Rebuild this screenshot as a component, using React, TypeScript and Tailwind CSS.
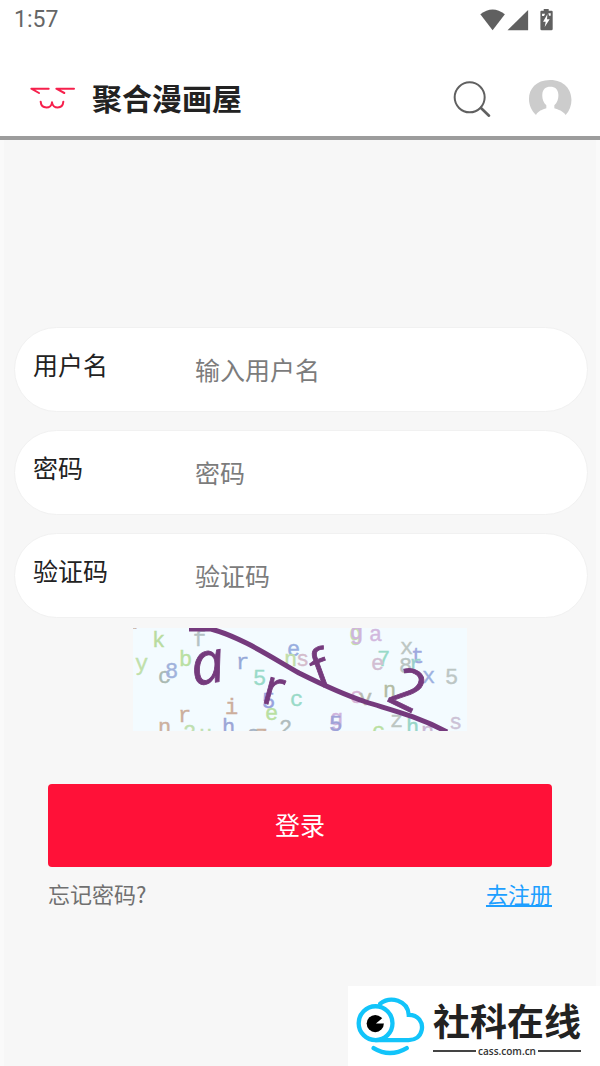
import React from 'react';

type FieldProps = {
  id: string;
  label: string;
  placeholder: string;
  type?: string;
};

type NoiseChar = [char: string, x: number, y: number, color: string];

const noise: NoiseChar[] = [
  ['r', -8, 11, '#c9b0a0'],
  ['k', 19, 19, '#b9dca0'],
  ['f', 60, 18, '#b4c2c4'],
  ['y', 2, 42, '#c0e0aa'],
  ['c', 25, 55, '#a9b9b2'],
  ['8', 32, 50, '#a0b2dc'],
  ['b', 46, 38, '#b9e0a2'],
  ['r', 103, 41, '#96a9d8'],
  ['5', 120, 57, '#98dac8'],
  ['5', 129, 80, '#98a2de'],
  ['i', 92, 86, '#ccae9c'],
  ['r', 45, 94, '#ccae9c'],
  ['n', 25, 106, '#ccb09e'],
  ['2', 50, 112, '#bfe0b0'],
  ['u', 66, 113, '#bfe0b0'],
  ['h', 89, 106, '#9ca6d6'],
  ['a', 114, 113, '#a6b4c6'],
  ['z', 122, 113, '#ccb09e'],
  ['e', 132, 92, '#b9e0a2'],
  ['2', 146, 107, '#b0bcbc'],
  ['c', 157, 78, '#98dac8'],
  ['e', 154, 28, '#98aee0'],
  ['n', 151, 38, '#c2deaa'],
  ['s', 163, 38, '#d4bccc'],
  ['g', 216, 12, '#c2deaa'],
  ['g', 217, 11, '#d0b4dc'],
  ['a', 236, 13, '#d2b8de'],
  ['x', 267, 26, '#bcc6c2'],
  ['t', 278, 35, '#9ea8de'],
  ['7', 244, 38, '#98dac8'],
  ['e', 238, 42, '#d2bed2'],
  ['8', 266, 45, '#b8c4c2'],
  ['r', 276, 43, '#98d0cc'],
  ['x', 289, 55, '#9cb0e0'],
  ['5', 312, 56, '#bcc6c4'],
  ['c', 217, 75, '#d8b4d8'],
  ['n', 250, 69, '#b2bca4'],
  ['v', 226, 77, '#b8bcb2'],
  ['g', 197, 97, '#d0b4dc'],
  ['5', 196, 103, '#9ea2d8'],
  ['c', 239, 110, '#b9e0a2'],
  ['z', 257, 99, '#bcc6c2'],
  ['h', 273, 106, '#98d6c8'],
  ['n', 288, 110, '#ccb8d4'],
  ['s', 316, 101, '#ccc2d6'],
];

const StatusBar = () => (
  <div className="flex h-10 items-center justify-between pr-11 pl-3.5 font-['Roboto',sans-serif]">
    <span className="text-[23px] leading-10 text-[#666]">1:57</span>
    <svg viewBox="145 20 235 75" className="mb-0.5 h-[25px] w-[78px]" fill="#606060" aria-hidden="true">
      <path d="M152 42 Q189 12 226 42 L189 90 Z" />
      <path d="M234 90 L296 29 V90 Z" />
      <path d="M343 26 h15 v5 h9 q3 0 3 3 v52 q0 4 -4 4 h-29 q-4 0 -4 -4 v-52 q0 -3 3 -3 h7 z" />
      <path d="M338 40 h9 l-3 7 h-6 z M357 39 h7 v7 h-5 z" fill="#fff" />
      <path d="M354 42 L341 64 H349 L346 80 L361 57 H353 Z" fill="#fff" />
    </svg>
  </div>
);

const Header = () => (
  <header className="flex h-[100px] items-center border-b-4 border-[#9c9c9c] px-7 pt-[18px]">
    <svg viewBox="84 256 150 75" className="h-[25px] w-[50px]" fill="none" stroke="#f6204c" strokeWidth="6" strokeLinejoin="round" strokeLinecap="round" aria-hidden="true">
      <path d="M146 267 H94 L117 280" />
      <path d="M222 267 H169 L193 280" />
      <path d="M122 306 C124 330 155 328 156 308 C158 328 188 330 190 306" />
    </svg>
    <h1 className="ml-3.5 text-[30px] leading-9 font-bold text-[#222]">聚合漫画屋</h1>
    <button type="button" aria-label="搜索" className="mt-1 ml-auto">
      <svg viewBox="66 240 120 114" className="h-[38px] w-10" fill="none" stroke="#606060" strokeLinecap="round">
        <circle cx="119" cy="292" r="45" strokeWidth="6" />
        <path d="M153 324 L177 347" strokeWidth="8" />
      </svg>
    </button>
    <button type="button" aria-label="我的" className="ml-9">
      <svg viewBox="297 232 132 111" className="h-[37px] w-11" fill="#ccc">
        <path d="M321 340 C283 304 296 235 363 235 C430 235 443 304 410 340 C402 328 388 324 376 320 V311 C386 302 389 290 388 278 C387 262 378 255 364 255 C350 255 341 262 340 278 C339 290 342 302 352 311 V320 C340 324 327 328 321 340 Z" />
      </svg>
    </button>
  </header>
);

const Field = ({ id, label, placeholder, type = 'text' }: FieldProps) => (
  <div className="flex h-[85px] items-start rounded-full border border-[#f1f1f1] bg-white pr-8 pl-[18px]">
    <label htmlFor={id} className="w-[162px] shrink-0 pt-[18px] text-[25px] leading-9 text-[#222]">
      {label}
    </label>
    <input
      id={id}
      type={type}
      placeholder={placeholder}
      className="h-[81px] min-w-0 flex-1 bg-transparent text-[25px] text-[#222] outline-none placeholder:text-[#7c7c7c]"
    />
  </div>
);

const Captcha = () => (
  <svg viewBox="0 0 334 103" className="block h-[103px] w-[334px] bg-[#f3fbff]" role="img" aria-label="验证码">
    <g fontSize="22" strokeWidth="0.4" className="font-['Liberation_Mono',monospace]">
      {noise.map(([char, x, y, color], i) => (
        <text key={i} x={x} y={y} fill={color} stroke={color}>
          {char}
        </text>
      ))}
    </g>
    <g fill="#753a7d" stroke="#753a7d" strokeWidth="0.8" className="font-['Open_Sans',sans-serif]">
      <text transform="translate(61 58) rotate(-10)" fontSize="59" fontStyle="italic">a</text>
      <text transform="translate(127 74) rotate(15)" fontSize="50">r</text>
      <text transform="translate(185 61) rotate(-20)" fontSize="52">f</text>
      <text transform="translate(252 72) rotate(26)" fontSize="56">2</text>
    </g>
    <path d="M56 1 H78 C108 9 138 29 166 45 C190 57 209 66 233 74 C258 82 284 88 314 104" fill="none" stroke="#753a7d" strokeWidth="5" />
  </svg>
);

const SiteBadge = () => (
  <div className="absolute right-0 bottom-0 flex h-20 w-[252px] items-center bg-white pl-1.5">
    <svg viewBox="40 50 220 190" className="h-[63px] w-[73px]" fill="none" stroke="#12c4fa" strokeWidth="13" strokeLinecap="round" aria-hidden="true">
      <path d="M119 76 C150 52 202 66 205 110 C235 110 249 134 244 156 C240 176 224 186 205 186 H105" />
      <circle cx="105" cy="135" r="51" />
      <path d="M99 210 Q148 240 199 210" />
      <circle cx="104" cy="136" r="26" fill="#000" stroke="none" />
      <path d="M106 136 L126 119 L134 136 Z" fill="#fff" stroke="none" />
    </svg>
    <div className="ml-1.5">
      <p className="text-[37px] leading-[50px] font-bold text-[#222]">社科在线</p>
      <div className="flex items-center gap-0.5">
        <span className="h-0.5 flex-1 bg-[#444]" />
        <span className="font-['Open_Sans',sans-serif] text-[10px] leading-3 font-semibold text-[#333]">cass.com.cn</span>
        <span className="h-0.5 flex-1 bg-[#444]" />
      </div>
    </div>
  </div>
);

const App = () => {
  return (
    <div className="relative flex min-h-screen flex-col bg-white font-['Noto_Sans_CJK_SC',sans-serif]">
      <StatusBar />
      <Header />
      <main className="flex-1 border-x-4 border-[#fafafa] bg-[#f7f7f7] pt-[187px] pb-20">
        <form onSubmit={(e) => e.preventDefault()}>
          <div className="flex flex-col gap-[18px] pr-2 pl-2.5">
            <Field id="username" label="用户名" placeholder="输入用户名" />
            <Field id="password" label="密码" placeholder="密码" type="password" />
            <Field id="captcha" label="验证码" placeholder="验证码" />
          </div>
          <div className="mt-2.5 flex justify-center">
            <Captcha />
          </div>
          <div className="mt-[53px] px-11">
            <button type="submit" className="h-[83px] w-full rounded bg-[#ff1138] pb-0.5 text-[25px] text-white">
              登录
            </button>
            <div className="mt-2 flex justify-between text-[22px] leading-9">
              <a href="#forgot" className="text-[#707070]">忘记密码?</a>
              <a href="#register" className="text-[#1e9fff] underline">去注册</a>
            </div>
          </div>
        </form>
      </main>
      <SiteBadge />
    </div>
  );
};

export default App;
